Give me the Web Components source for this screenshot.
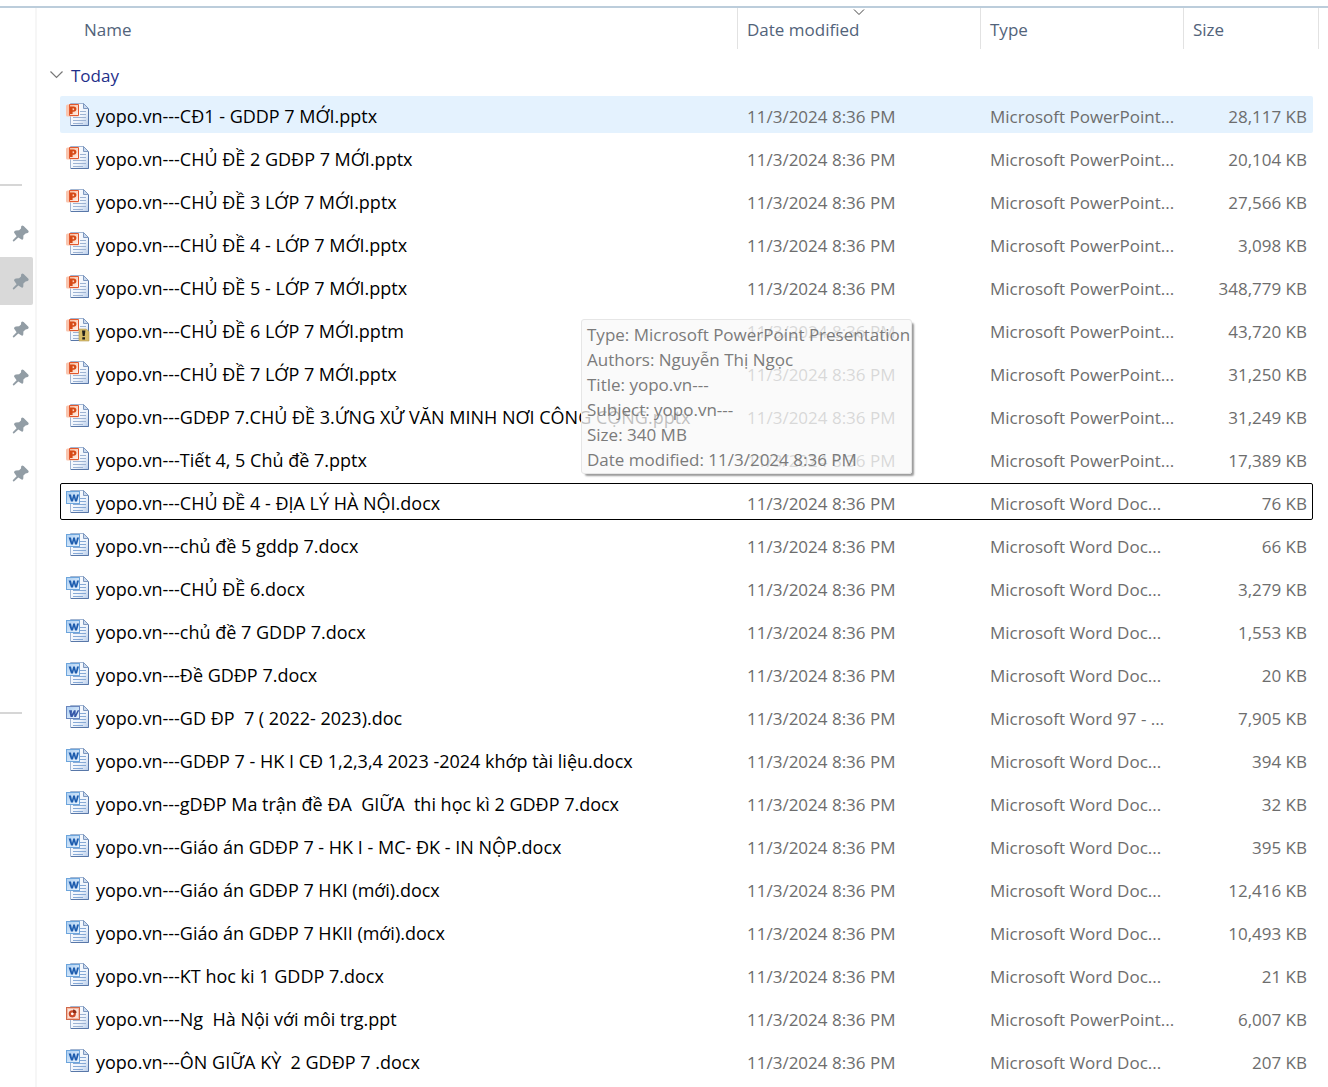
<!DOCTYPE html>
<html lang="vi">
<head>
<meta charset="utf-8">
<title>Files</title>
<style>
body{margin:0;background:#fff;font-family:"Open Sans","Noto Sans",sans-serif;font-size:17px;line-height:25px;color:#000}
</style>
</head>
<body>
<file-explorer>
  <quick-access slot="side"></quick-access>
  <file-list></file-list>
</file-explorer>
<script>
class FileExplorer extends HTMLElement{
  constructor(){
    super();
    this.attachShadow({mode:'open'}).innerHTML=`
    <style>
      :host{display:block;height:100vh;overflow:hidden;box-sizing:border-box;padding-top:6px}
      .frame{display:flex;border-top:2px solid #bccddb;min-height:100%;box-sizing:border-box}
      main{flex:1;min-width:0}
    </style>
    <div class="frame"><slot name="side"></slot><main><slot></slot></main></div>`;
  }
}
customElements.define('file-explorer',FileExplorer);

class QuickAccess extends HTMLElement{
  constructor(){
    super();
    const pin=i=>`<button type="button" aria-label="Pinned ${i+1}" class="${i===1?'on':''}"><svg width="18" height="18" viewBox="0 0 18 18"><path d="M1.2 16.6 L.7 15.2 L4.6 11.2 L2 7.6 Q2.2 5.6 4 5.5 L7.1 5.3 L9 3.4 Q8.8 .6 10.2 .5 L11.6 1.1 L16.4 5.8 L16.7 7 Q16.2 8.4 13.6 8.4 L11.4 10.4 L11.3 13.4 Q10.8 15 9.6 14.6 L6.3 12.4 L2.2 16.3Z" fill="#929da5"/></svg></button>`;
    this.attachShadow({mode:'open'}).innerHTML=`
    <style>
      :host{display:block;width:35px;border-right:2px solid #f6f6f6;flex:none}
      nav{display:flex;flex-direction:column;padding-top:176px}
      hr{margin:0;border:0;width:22px;height:2px;background:#d6d6d6}
      .pins{display:flex;flex-direction:column;margin:23px 2px 215px 0}
      button{height:48px;border:0;padding:2px 3px 0 0;background:none;display:flex;justify-content:flex-end;align-items:center;border-radius:0 2px 2px 0}
      .on{background:#d9d9d9}
    </style>
    <nav aria-label="Quick access"><hr><div class="pins">${Array.from({length:6},(_,i)=>pin(i)).join('')}</div><hr></nav>`;
  }
}
customElements.define('quick-access',QuickAccess);

/* Document glyph with a coloured application badge */
class FileIcon extends HTMLElement{
  connectedCallback(){
    const kind=this.getAttribute('kind');
    const word=kind.startsWith('doc');
    const old=kind==='doc'||kind==='ppt';
    const line=word?'#86a9d6':'#9db3d3';
    let badge;
    if(word){
      const letter=old
        ?'<path d="M3 5.2H6L5.8 9.2L8 5.2H9.7L9.6 9.2L11.6 5.2H13.2L10 12H8.2V8.8L6.6 12H4.5Z" fill="#3558a8"/>'
        :'<path d="M2.6 4.6H5L6 8.9L7.2 4.6H8.9L10 8.9L11 4.6H13L11 11.5H9L8 7.8L7 11.5H5Z" fill="#1d5cae"/>';
      badge=`<rect x=".5" y="1.5" width="13" height="12" fill="url(#b)" stroke="${old?'#6a86bd':'#6da5dc'}"/>${letter}`;
    }else if(old){
      badge=`<rect x=".5" y="1.5" width="13" height="12" fill="#f6b8a2" stroke="#d0694a"/><rect x="2" y="3" width="10" height="9" fill="#fbe2d8"/><circle cx="6.3" cy="7.8" r="3.6" fill="#c94a27"/><circle cx="6.3" cy="7.8" r="1.4" fill="#fff"/><path d="M7 7V3.5A3.5 3.5 0 0 1 10.5 7Z" fill="#8d2e18"/>`;
    }else{
      badge=`<path d="M0 3Q0 1.6 1.6 1.5H12.5V13.5H1.5Q0 13.5 0 12Z" fill="#fac5ae"/><path d="M3.5 1.5H12.5V12.5H3.5Z" fill="url(#p)" stroke="#e2582e"/><path fill-rule="evenodd" d="M4 3.6H7.6Q10.4 3.6 10.4 6.1T7.4 8.7H6.6V11H4ZM6.6 5.2V7.2H7.2Q8.2 7.2 8.2 6.2T7.2 5.2Z" fill="#d64a16"/>`;
    }
    const macro=kind==='pptm'?'<path d="M13 11H20L23 13.5V23H13Z" fill="#d8bd68"/><path d="M13 11H20L23 13.5V23H13Z" fill="none" stroke="#b79b54" stroke-width=".6"/><path d="M16 12.5H19.4L18.7 18H16.7ZM16.3 19.2H19V21.6H16.3Z" fill="#22201a"/>':'';
    this.attachShadow({mode:'open'}).innerHTML=`
    <style>:host{display:block;width:24px;height:24px;flex:none}svg{display:block}</style>
    <svg width="24" height="24" viewBox="0 0 24 24" aria-hidden="true">
      <defs>
        <linearGradient id="g" x1="0" y1="0" x2="1" y2="1"><stop offset="0" stop-color="#fdfeff"/><stop offset=".6" stop-color="#f0f5fc"/><stop offset="1" stop-color="#b9cdea"/></linearGradient>
        <linearGradient id="b" x1="0" y1="0" x2="1" y2="1"><stop offset="0" stop-color="#a9cdf2"/><stop offset="1" stop-color="#eef6fe"/></linearGradient>
        <linearGradient id="p" x1="0" y1="0" x2="1" y2="1"><stop offset="0" stop-color="#f9b898"/><stop offset="1" stop-color="#fff3ec"/></linearGradient>
      </defs>
      <path d="M4.5.5H17.5L22.5 5.5V22.5H4.5Z" fill="url(#g)" stroke="#a1b5d2"/>
      <path d="M22.5 6V22.5H5" fill="none" stroke="#5877a8"/>
      <path d="M17.5.5V5.5H22.5Z" fill="#cbdaee" stroke="#7f99c0"/>
      <path d="M14 8.5H20M14 11.5H20M7 14.5H20M7 17.5H20M7 20.5H17" stroke="${line}" fill="none"/>
      ${badge}${macro}
    </svg>`;
  }
}
customElements.define('file-icon',FileIcon);

class InfoTip extends HTMLElement{
  constructor(){
    super();
    this.attachShadow({mode:'open'}).innerHTML=`
    <style>
      :host{display:block;box-sizing:border-box;padding:2px 1px 1px 5px;border:1px solid #e6e6e6;border-radius:3px;background:rgba(249,249,249,.77);box-shadow:3px 3px 2px -1px rgba(0,0,0,.4);color:#7b7b7b;white-space:nowrap}
    </style><slot></slot>`;
  }
}
customElements.define('info-tip',InfoTip);

const FILES=[
['pptx','yopo.vn---CĐ1 - GDDP 7 MỚI.pptx','28,117 KB','hover'],
['pptx','yopo.vn---CHỦ ĐỀ 2 GDĐP 7 MỚI.pptx','20,104 KB'],
['pptx','yopo.vn---CHỦ ĐỀ 3 LỚP 7 MỚI.pptx','27,566 KB'],
['pptx','yopo.vn---CHỦ ĐỀ 4 - LỚP 7 MỚI.pptx','3,098 KB'],
['pptx','yopo.vn---CHỦ ĐỀ 5 - LỚP 7 MỚI.pptx','348,779 KB'],
['pptm','yopo.vn---CHỦ ĐỀ 6 LỚP 7 MỚI.pptm','43,720 KB'],
['pptx','yopo.vn---CHỦ ĐỀ 7 LỚP 7 MỚI.pptx','31,250 KB'],
['pptx','yopo.vn---GDĐP 7.CHỦ ĐỀ 3.ỨNG XỬ VĂN MINH NƠI CÔNG CỘNG.pptx','31,249 KB'],
['pptx','yopo.vn---Tiết 4, 5 Chủ đề 7.pptx','17,389 KB'],
['docx','yopo.vn---CHỦ ĐỀ 4 - ĐỊA LÝ HÀ NỘI.docx','76 KB','focus'],
['docx','yopo.vn---chủ đề 5 gddp 7.docx','66 KB'],
['docx','yopo.vn---CHỦ ĐỀ 6.docx','3,279 KB'],
['docx','yopo.vn---chủ đề 7 GDDP 7.docx','1,553 KB'],
['docx','yopo.vn---Đề GDĐP 7.docx','20 KB'],
['doc','yopo.vn---GD ĐP  7 ( 2022- 2023).doc','7,905 KB'],
['docx','yopo.vn---GDĐP 7 - HK I CĐ 1,2,3,4 2023 -2024 khớp tài liệu.docx','394 KB'],
['docx','yopo.vn---gDĐP Ma trận đề ĐA  GIỮA  thi học kì 2 GDĐP 7.docx','32 KB'],
['docx','yopo.vn---Giáo án GDĐP 7 - HK I - MC- ĐK - IN NỘP.docx','395 KB'],
['docx','yopo.vn---Giáo án GDĐP 7 HKI (mới).docx','12,416 KB'],
['docx','yopo.vn---Giáo án GDĐP 7 HKII (mới).docx','10,493 KB'],
['docx','yopo.vn---KT hoc ki 1 GDDP 7.docx','21 KB'],
['ppt','yopo.vn---Ng  Hà Nội với môi trg.ppt','6,007 KB'],
['docx','yopo.vn---ÔN GIỮA KỲ  2 GDĐP 7 .docx','207 KB']];
const TYPES={pptx:'Microsoft PowerPoint...',pptm:'Microsoft PowerPoint...',ppt:'Microsoft PowerPoint...',docx:'Microsoft Word Doc...',doc:'Microsoft Word 97 - ...'};

class FileList extends HTMLElement{
  constructor(){
    super();
    const rows=FILES.map(([k,n,s,state])=>`<tr class="file ${state||''}"><td><div class="name"><file-icon kind="${k}"></file-icon><span>${n}</span></div></td><td>11/3/2024 8:36 PM</td><td>${TYPES[k]}</td><td class="size">${s}</td></tr>`).join('');
    this.attachShadow({mode:'open'}).innerHTML=`
    <style>
      :host{display:flow-root;position:relative;padding:0 15px 0 23px}
      table{width:100%;table-layout:fixed;border-collapse:separate;border-spacing:0 6px;margin-top:-6px}
      .date{width:243px}.type{width:203px}.kb{width:130px}
      th,td{padding:0;text-align:left;font-weight:400;white-space:nowrap}
      button{font:inherit;color:inherit;background:none;border:0;padding:0;text-align:left}
      thead button{display:block;box-sizing:border-box;width:100%;height:41px;padding:2px 0 0 9px;border-left:1px solid #e2e2e2;color:#52637a}
      thead th{position:relative}
      thead th:first-child button{border:0;padding-left:24px}
      thead th:last-child button{width:136px;border-right:1px solid #e2e2e2}
      .sort{position:absolute;top:1px;left:50%;margin-left:-6px}
      .group button{display:flex;align-items:center;gap:8px;height:35px;margin-left:-10px;padding-top:5px;color:#1f2f8a}
      .file td{height:33px;padding:4px 0 0 10px;color:#6d6d6d}
      .file td:first-child{height:37px;padding:0 0 0 6px;color:#000;border-radius:2px 0 0 2px}
      .name{display:flex;align-items:center;gap:6px}
      .name span{padding-top:4px;font-size:18px;white-space:pre}
      .file td.size{text-align:right;padding-right:6px}
      .file td:last-child{border-radius:0 2px 2px 0}
      .hover td{background:#e4f2fe}
      .focus{outline:1px solid #000;outline-offset:-1px;border-radius:2px}
      info-tip{position:absolute;left:544px;top:311px}
      info-tip div{height:25px}
    </style>
    <table>
      <colgroup><col><col class="date"><col class="type"><col class="kb"></colgroup>
      <thead><tr>
        <th scope="col"><button type="button">Name</button></th>
        <th scope="col" aria-sort="descending"><button type="button">Date modified</button><svg class="sort" width="12" height="7" viewBox="0 0 12 7"><path d="M1 .5L6 5.5L11 .5" fill="none" stroke="#444"/></svg></th>
        <th scope="col"><button type="button">Type</button></th>
        <th scope="col"><button type="button">Size</button></th>
      </tr></thead>
      <tbody>
        <tr class="group"><th colspan="4" scope="rowgroup"><button type="button" aria-expanded="true"><svg width="13" height="9" viewBox="0 0 13 9"><path d="M.5 .5L6.5 6.5L12.5 .5" fill="none" stroke="#777" stroke-width="1.2"/></svg><span>Today</span></button></th></tr>
        ${rows}
      </tbody>
    </table>
    <info-tip role="tooltip"><div>Type: Microsoft PowerPoint Presentation</div><div>Authors: Nguyễn Thị Ngọc</div><div>Title: yopo.vn---</div><div>Subject: yopo.vn---</div><div>Size: 340 MB</div><div>Date modified: 11/3/2024 8:36 PM</div></info-tip>`;
  }
}
customElements.define('file-list',FileList);
</script>
</body>
</html>
